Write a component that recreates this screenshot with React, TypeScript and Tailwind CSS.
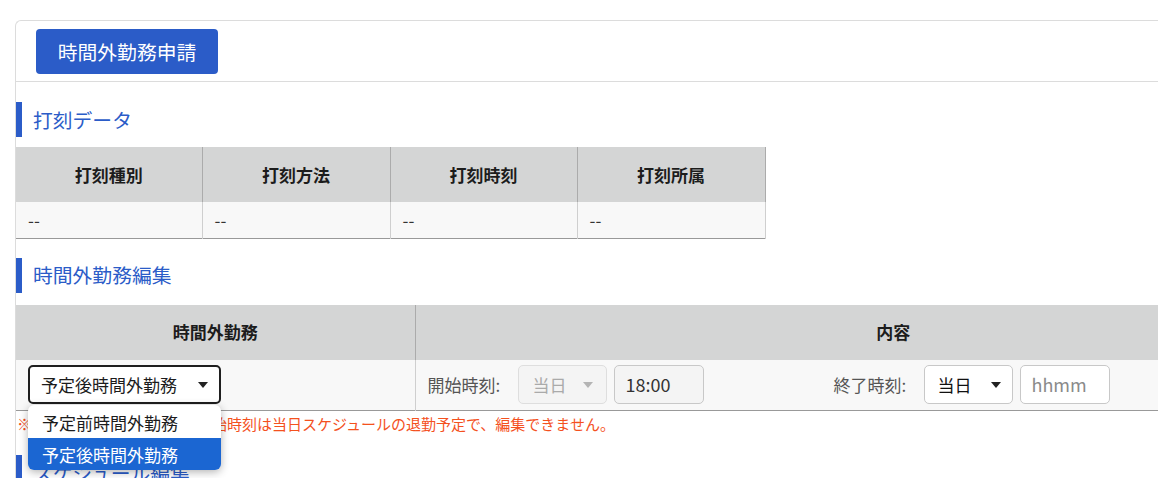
import React from "react";

const jp = "font-['Noto_Sans_CJK_JP','Noto_Sans',sans-serif]";

function Caret({ muted = false }: { muted?: boolean }) {
  return (
    <svg
      width="10"
      height="6"
      viewBox="0 0 10 6"
      aria-hidden="true"
      className={muted ? "fill-[#b4b4b4]" : "fill-[#222]"}
    >
      <path d="M0 0h10L5 6z" />
    </svg>
  );
}

function SectionHeading({ title }: { title: string }) {
  return (
    <h2 className="flex h-[35px] items-center border-l-[6px] border-[#2b5cc8] pl-[11px] text-[19.8px] leading-none font-normal text-[#2b5cc8]">
      {title}
    </h2>
  );
}

function PunchTable() {
  const heads = ["打刻種別", "打刻方法", "打刻時刻", "打刻所属"];
  return (
    <table className="w-[749px] table-fixed border-collapse">
      <colgroup>
        <col className="w-[186px]" />
        <col className="w-[188px]" />
        <col className="w-[187px]" />
        <col className="w-[188px]" />
      </colgroup>
      <thead>
        <tr className="h-[55px] bg-[#d4d5d5]">
          {heads.map((h) => (
            <th
              key={h}
              className="border-r border-[#ababab] text-center text-[17px] font-bold text-[#1c1c1c]"
            >
              {h}
            </th>
          ))}
        </tr>
      </thead>
      <tbody>
        <tr className="h-[36px] border-b border-[#999] bg-[#f8f8f8]">
          {heads.map((h) => (
            <td
              key={h}
              className="border-r border-[#cfcfcf] pl-[12px] text-[17px] text-[#333]"
            >
              --
            </td>
          ))}
        </tr>
      </tbody>
    </table>
  );
}

function OvertimeTable() {
  return (
    <table className="w-[1355px] table-fixed border-collapse">
      <colgroup>
        <col className="w-[399px]" />
        <col />
      </colgroup>
      <thead>
        <tr className="h-[55px] bg-[#d4d5d5]">
          <th className="border-r border-[#ababab] text-center text-[17px] font-bold text-[#1c1c1c]">
            時間外勤務
          </th>
          <th className="text-center text-[17px] font-bold text-[#1c1c1c]">内容</th>
        </tr>
      </thead>
      <tbody>
        <tr className="h-[51px] border-b border-[#999] bg-[#f8f8f8]">
          <td className="border-r border-[#cfcfcf] pl-[12px] align-middle">
            <div className="relative w-[193px]">
              <div className="flex h-[39px] items-center justify-between rounded-[5px] border-2 border-[#1f1f1f] bg-white pr-[11px] pl-[11px] text-[17px] text-[#1c1c1c]">
                <span>予定後時間外勤務</span>
                <Caret />
              </div>
              <ul className="absolute top-[40px] left-0 z-10 w-[193px] overflow-hidden rounded-[6px] bg-white pt-[2px] text-[17px] shadow-[0_2px_8px_rgba(0,0,0,0.3)]">
                <li className="flex h-[31px] items-center pl-[14px] text-[#1c1c1c]">
                  予定前時間外勤務
                </li>
                <li className="flex h-[32px] items-center bg-[#1b66d2] pl-[14px] text-white">
                  予定後時間外勤務
                </li>
              </ul>
            </div>
          </td>
          <td className="pl-[12px] align-middle">
            <div className="flex items-center">
              <span className="w-[90px] text-[17px] text-[#555]">開始時刻:</span>
              <div className="flex h-[39px] w-[89px] items-center justify-between rounded-[5px] border border-[#dedede] bg-[#f4f4f4] pr-[13px] pl-[14px] text-[17px] text-[#aaa]">
                <span>当日</span>
                <Caret muted />
              </div>
              <div className="ml-[7px] flex h-[39px] w-[90px] items-center rounded-[5px] border border-[#c8c8c8] bg-[#f4f4f4] pl-[11px] text-[18px] text-[#333]">
                18:00
              </div>
              <span className="ml-[130px] w-[90px] text-[17px] text-[#555]">終了時刻:</span>
              <div className="flex h-[39px] w-[89px] items-center justify-between rounded-[5px] border border-[#c8c8c8] bg-white pr-[11px] pl-[13px] text-[17px] text-[#111]">
                <span>当日</span>
                <Caret />
              </div>
              <div className="ml-[7px] flex h-[39px] w-[90px] items-center rounded-[5px] border border-[#c8c8c8] bg-white pl-[11px] text-[18px] text-[#8a8a8a]">
                hhmm
              </div>
            </div>
          </td>
        </tr>
      </tbody>
    </table>
  );
}

export default function App() {
  return (
    <div className={`h-[478px] w-[1158px] overflow-hidden bg-white ${jp}`}>
      <div className="pt-[20px] pl-[15px]">
        <div className="w-[1400px] rounded-tl-[6px] border-t border-l border-[#dcdcdc]">
          <div className="h-[61px] border-b border-[#dcdcdc] pt-[8px] pl-[20px]">
            <button className="flex h-[45px] w-[182px] items-center justify-center rounded-[4px] bg-[#2b5cc8] text-[19.8px] text-white">
              時間外勤務申請
            </button>
          </div>

          <div className="mt-[20px]">
            <SectionHeading title="打刻データ" />
          </div>
          <div className="mt-[10px]">
            <PunchTable />
          </div>

          <div className="mt-[19px]">
            <SectionHeading title="時間外勤務編集" />
          </div>
          <div className="mt-[12px]">
            <OvertimeTable />
          </div>
          <p className="mt-[2px] pl-px text-[15px] leading-[22px] text-[#f4511e]">
            ※予定後時間外勤務の際、開始時刻は当日スケジュールの退勤予定で、編集できません。
          </p>

          <div className="mt-[20px]">
            <SectionHeading title="スケジュール編集" />
          </div>
        </div>
      </div>
    </div>
  );
}
